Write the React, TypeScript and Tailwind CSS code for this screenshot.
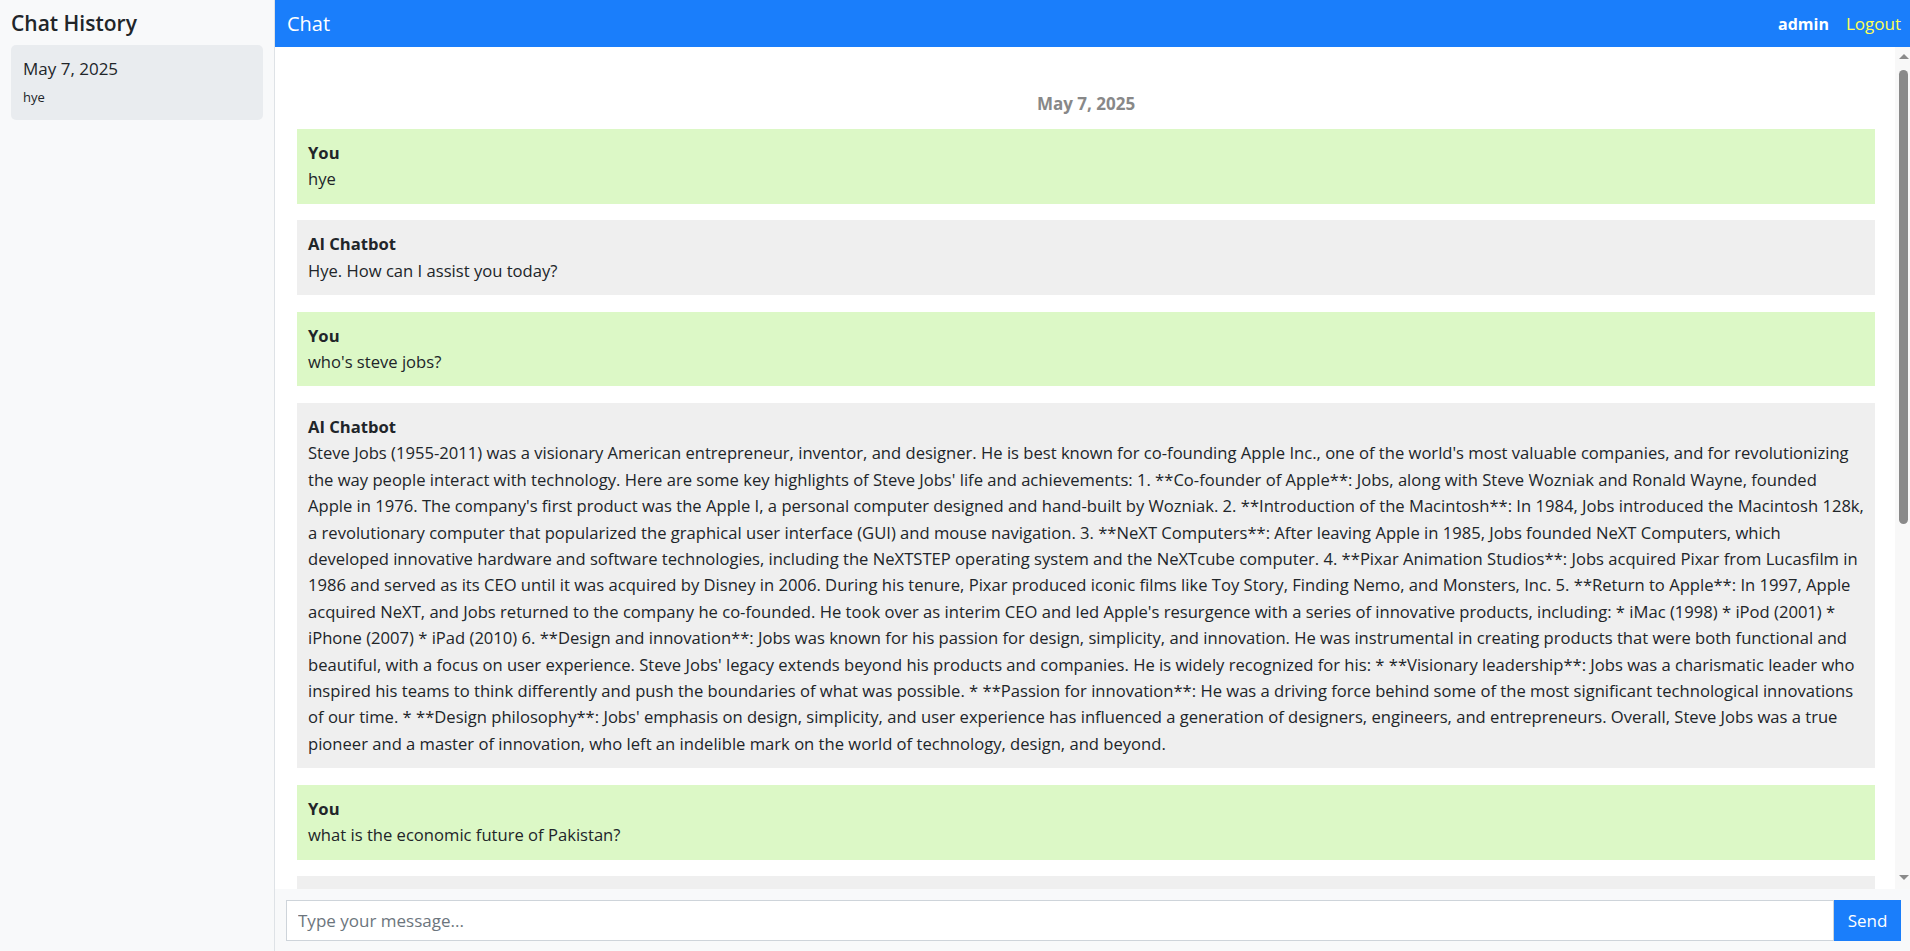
import React, { useState } from 'react';

type Message = { sender: 'You' | 'AI Chatbot'; text: string };

const messages: Message[] = [
  { sender: 'You', text: 'hye' },
  { sender: 'AI Chatbot', text: 'Hye. How can I assist you today?' },
  { sender: 'You', text: "who's steve jobs?" },
  {
    sender: 'AI Chatbot',
    text: "Steve Jobs (1955-2011) was a visionary American entrepreneur, inventor, and designer. He is best known for co-founding Apple Inc., one of the world's most valuable companies, and for revolutionizing the way people interact with technology. Here are some key highlights of Steve Jobs' life and achievements: 1. **Co-founder of Apple**: Jobs, along with Steve Wozniak and Ronald Wayne, founded Apple in 1976. The company's first product was the Apple I, a personal computer designed and hand-built by Wozniak. 2. **Introduction of the Macintosh**: In 1984, Jobs introduced the Macintosh 128k, a revolutionary computer that popularized the graphical user interface (GUI) and mouse navigation. 3. **NeXT Computers**: After leaving Apple in 1985, Jobs founded NeXT Computers, which developed innovative hardware and software technologies, including the NeXTSTEP operating system and the NeXTcube computer. 4. **Pixar Animation Studios**: Jobs acquired Pixar from Lucasfilm in 1986 and served as its CEO until it was acquired by Disney in 2006. During his tenure, Pixar produced iconic films like Toy Story, Finding Nemo, and Monsters, Inc. 5. **Return to Apple**: In 1997, Apple acquired NeXT, and Jobs returned to the company he co-founded. He took over as interim CEO and led Apple's resurgence with a series of innovative products, including: * iMac (1998) * iPod (2001) * iPhone (2007) * iPad (2010) 6. **Design and innovation**: Jobs was known for his passion for design, simplicity, and innovation. He was instrumental in creating products that were both functional and beautiful, with a focus on user experience. Steve Jobs' legacy extends beyond his products and companies. He is widely recognized for his: * **Visionary leadership**: Jobs was a charismatic leader who inspired his teams to think differently and push the boundaries of what was possible. * **Passion for innovation**: He was a driving force behind some of the most significant technological innovations of our time. * **Design philosophy**: Jobs' emphasis on design, simplicity, and user experience has influenced a generation of designers, engineers, and entrepreneurs. Overall, Steve Jobs was a true pioneer and a master of innovation, who left an indelible mark on the world of technology, design, and beyond.",
  },
  { sender: 'You', text: 'what is the economic future of Pakistan?' },
  {
    sender: 'AI Chatbot',
    text: "The economic future of Pakistan is a complex and multifaceted topic, shaped by a range of domestic and global factors. While the country faces significant challenges, it also has considerable potential for growth and development. Here are some key aspects to consider: 1. **Macroeconomic challenges**: Pakistan has struggled with high inflation, a large fiscal deficit, rising public debt, and low foreign exchange reserves. These issues have led the country to seek repeated support from the International Monetary Fund (IMF) and other international lenders. 2. **Energy sector**: Chronic energy shortages, circular debt, and high electricity costs have constrained industrial output. Investment in renewable energy, such as solar, wind, and hydropower, could help reduce reliance on imported fuel. 3. **China-Pakistan Economic Corridor (CPEC)**: CPEC is a major infrastructure initiative that includes roads, railways, power plants, and special economic zones. If implemented effectively, it could boost connectivity, trade, and investment. 4. **Demographic dividend**: Pakistan has one of the youngest populations in the world. With the right investment in education, skills, and job creation, this young workforce could become a powerful engine of growth. 5. **Agriculture**: Agriculture remains a backbone of the economy, employing a large share of the labor force. Modernizing farming practices, improving water management, and adapting to climate change will be essential. 6. **Information technology and services**: The IT sector and freelancing industry have grown rapidly, and IT exports have the potential to become a major source of foreign exchange. 7. **Exports and trade**: Diversifying exports beyond textiles and improving competitiveness could help narrow the trade deficit. Key reforms that could shape Pakistan's economic future include: * **Tax reform**: Broadening the tax base and improving collection. * **Governance**: Strengthening institutions, reducing corruption, and ensuring policy continuity. * **Political stability**: A stable political environment is crucial for investor confidence. * **Climate resilience**: Pakistan is highly vulnerable to floods, heatwaves, and water scarcity, making climate adaptation a priority. Overall, Pakistan's economic future will depend on its ability to implement structural reforms, maintain macroeconomic stability, attract investment, and harness the potential of its young population.",
  },
];

// drawn scrollbar, the page screenshot hides the native one
const ScrollRail = () => (
  <div aria-hidden className="flex w-[15px] shrink-0 flex-col items-center bg-[#f8f8f8] pb-[9px] pl-[2px] pt-[7px]">
    <div className="h-0 w-0 border-b-[5px] border-l-[5px] border-r-[5px] border-b-[#8a8a8a] border-l-transparent border-r-transparent" />
    <div className="mt-[11px] h-[454px] w-[9px] rounded-full bg-[#8a8a8a]" />
    <div className="flex-1" />
    <div className="h-0 w-0 border-l-[5px] border-r-[5px] border-t-[5px] border-l-transparent border-r-transparent border-t-[#8a8a8a]" />
  </div>
);

const App = () => {
  const [input, setInput] = useState('');

  return (
    <div className="flex h-screen w-full overflow-hidden bg-white font-['Open_Sans','Noto_Sans',Arial,sans-serif] text-[#212529]">
      {/* sidebar */}
      <aside className="w-[275px] shrink-0 border-r border-[#dee2e6] bg-[#f8f9fa] px-[11px] pt-[11px]">
        <h2 className="text-[21px] font-semibold leading-[25px]">Chat History</h2>
        <div className="mt-[9px] h-[75px] rounded-[5px] bg-[#e9ecef] px-3 pt-[14px]">
          <div className="text-[17px] leading-[20px]">May 7, 2025</div>
          <div className="mt-[9px] text-[13px] leading-[19px]">hye</div>
        </div>
      </aside>

      <main className="flex min-w-0 flex-1 flex-col">
        <header className="flex h-[47px] shrink-0 items-center justify-between bg-[#1a7efb] pl-3 pr-[9px]">
          <span className="text-[20px] text-white">Chat</span>
          <div className="flex items-center gap-[17px]">
            <span className="text-[16px] font-bold text-white">admin</span>
            <button className="text-[17px] text-[#ffff55]">Logout</button>
          </div>
        </header>

        <div className="flex min-h-0 flex-1">
          <div className="min-w-0 flex-1 overflow-y-auto pb-5 pl-[22px] pr-5 pt-[43px] [scrollbar-width:none]">
            <div className="mb-3 text-center text-[17px] font-bold leading-[27px] text-[#888888]">May 7, 2025</div>
            <div className="flex flex-col gap-[16.5px]">
              {messages.map((m, i) => (
                <div
                  key={i}
                  className={`p-[11px] text-[16.6px] leading-[26.4px] ${
                    m.sender === 'You' ? 'bg-[#dcf8c6]' : 'bg-[#efefef]'
                  }`}
                >
                  <div className="font-bold">{m.sender}</div>
                  <div>{m.text}</div>
                </div>
              ))}
            </div>
          </div>
          <ScrollRail />
        </div>

        <form
          className="flex shrink-0 bg-[#f8f9fa] pb-[10px] pl-[11px] pr-[9px] pt-[11px]"
          onSubmit={(e) => {
            e.preventDefault();
            setInput('');
          }}
        >
          <input
            value={input}
            onChange={(e) => setInput(e.target.value)}
            placeholder="Type your message..."
            className="h-[41px] min-w-0 flex-1 border border-[#ced4da] bg-white px-[11px] text-[17px] outline-none placeholder:text-[#6c757d]"
          />
          <button type="submit" className="h-[41px] w-[67px] shrink-0 bg-[#1a7efb] text-[17px] text-white">
            Send
          </button>
        </form>
      </main>
    </div>
  );
};

export default App;
